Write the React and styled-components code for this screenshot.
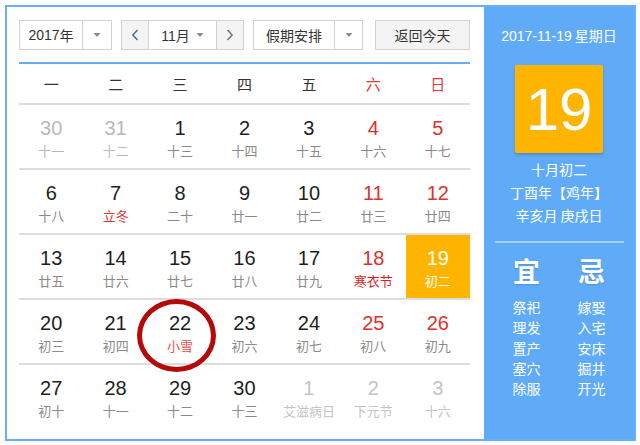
import React from "react";
import styled, { createGlobalStyle } from "styled-components";

const Global = createGlobalStyle`
  html, body { margin: 0; padding: 0; background: #fff; }
  body { font-family: "Liberation Sans", "Noto Sans CJK SC", Arial, sans-serif; }
`;

const Widget = styled.div`
  margin: 5px 0 0 5px;
  width: 627px;
  height: 432px;
  border: 2px solid #6aaef6;
  display: flex;
  background: #fff;
`;

const Main = styled.div`
  width: 451px;
  padding: 13px 14px 0 12px;
  display: flex;
  flex-direction: column;
`;

const Controls = styled.div`
  display: flex;
  height: 30px;
  align-items: stretch;
`;

const Box = styled.div`
  display: flex;
  border: 1px solid #d2d2d2;
  box-sizing: border-box;
  width: ${(p) => p.$w}px;
  margin-right: ${(p) => p.$mr || 0}px;
  background: ${(p) => p.$bg || "#fff"};
  font-family: "Noto Sans CJK SC", "Liberation Sans", sans-serif;
  font-size: 14px;
  color: #333;
`;

const Part = styled.div`
  display: flex;
  align-items: center;
  justify-content: center;
  gap: 6px;
  width: ${(p) => (p.$w ? p.$w + "px" : "auto")};
  flex: ${(p) => (p.$w ? "none" : 1)};
  border-left: ${(p) => (p.$sep ? "1px solid #d2d2d2" : "none")};
  border-right: ${(p) => (p.$sepR ? "1px solid #d2d2d2" : "none")};
  background: ${(p) => p.$bg || "transparent"};
`;

const Num = styled.span`
  font-family: "Liberation Sans", Arial, sans-serif;
`;

const Caret = () => (
  <svg width="8" height="5" viewBox="0 0 8 5">
    <path d="M0.5 0 L7.5 0 L4 4 Z" fill="#8a8a8a" />
  </svg>
);

const Chevron = ({ dir, color }) => (
  <svg width="8" height="12" viewBox="0 0 8 12">
    <path
      d={dir === "l" ? "M6.5 1 L1.8 6 L6.5 11" : "M1.5 1 L6.2 6 L1.5 11"}
      fill="none"
      stroke={color}
      strokeWidth="1.4"
    />
  </svg>
);

const BlueLine = styled.div`
  margin-top: 12px;
  height: 2px;
  background: #68acf4;
`;

const Grid = styled.div`
  display: grid;
  grid-template-columns: repeat(7, 1fr);
`;

const Head = styled.div`
  height: 39px;
  display: flex;
  align-items: center;
  justify-content: center;
  font-family: "Noto Sans CJK SC", sans-serif;
  font-size: 15px;
  color: ${(p) => (p.$red ? "#e23b3b" : "#333")};
  border-bottom: 2px solid #dcdcdc;
`;

const Cell = styled.div`
  position: relative;
  padding-top: 12px;
  height: 51px;
  box-sizing: content-box;
  display: flex;
  flex-direction: column;
  align-items: center;
  background: ${(p) => (p.$sel ? "#ffb400" : "transparent")};
  border-bottom: ${(p) => (p.$last ? "none" : "2px solid #dddddd")};
`;

const Day = styled.div`
  font-family: "Liberation Sans", Arial, sans-serif;
  font-size: 20px;
  line-height: 22px;
  color: ${(p) => p.$c};
`;

const Lunar = styled.div`
  margin-top: 2px;
  font-family: "Noto Sans CJK SC", sans-serif;
  font-size: 13px;
  line-height: 20px;
  color: ${(p) => p.$c};
`;

const Ring = styled.div`
  position: absolute;
  left: -11px;
  top: -1px;
  width: 79px;
  height: 73px;
  box-sizing: border-box;
  border: 5px solid #b50a0a;
  border-radius: 50%;
  z-index: 2;
  pointer-events: none;
`;

const Side = styled.div`
  flex: 1;
  background: #5fabf8;
  display: flex;
  flex-direction: column;
  align-items: center;
  color: #fff;
  font-family: "Noto Sans CJK SC", sans-serif;
`;

const DateLine = styled.div`
  margin-top: 19px;
  font-size: 14px;
  line-height: 18px;
  white-space: nowrap;
`;

const Big = styled.div`
  margin-top: 20px;
  width: 88px;
  height: 88px;
  background: #ffb400;
  border-radius: 2px;
  box-shadow: 0 2px 3px rgba(0, 0, 0, 0.18);
  display: flex;
  align-items: center;
  justify-content: center;
  font-family: "Liberation Sans", Arial, sans-serif;
  font-size: 60px;
  color: #fff;
`;

const Info = styled.div`
  margin-top: 5px;
  font-size: 14px;
  line-height: 23px;
  text-align: center;
  white-space: nowrap;
`;

const Sep = styled.div`
  margin-top: 14px;
  width: 129px;
  height: 2px;
  background: rgba(255, 255, 255, 0.45);
`;

const Luck = styled.div`
  margin-top: 11px;
  display: grid;
  grid-template-columns: 60px 60px;
  column-gap: 5px;
  justify-items: center;
`;

const LuckHead = styled.div`
  font-size: 27px;
  line-height: 34px;
  font-weight: 700;
  text-shadow: 0 1px 2px rgba(0, 0, 0, 0.15);
  margin-bottom: 9px;
`;

const LuckItem = styled.div`
  font-size: 14px;
  line-height: 20.25px;
`;

const C = {
  black: "#1e1e1e",
  gray: "#b9b9b9",
  red: "#e0302f",
  lunar: "#8a8a8a",
  light: "#c4c4c4",
};

const weeks = [
  [
    [30, "十一", "gray"],
    [31, "十二", "gray"],
    [1, "十三"],
    [2, "十四"],
    [3, "十五"],
    [4, "十六", "we"],
    [5, "十七", "we"],
  ],
  [
    [6, "十八"],
    [7, "立冬", "fest"],
    [8, "二十"],
    [9, "廿一"],
    [10, "廿二"],
    [11, "廿三", "we"],
    [12, "廿四", "we"],
  ],
  [
    [13, "廿五"],
    [14, "廿六"],
    [15, "廿七"],
    [16, "廿八"],
    [17, "廿九"],
    [18, "寒衣节", "wefest"],
    [19, "初二", "sel"],
  ],
  [
    [20, "初三"],
    [21, "初四"],
    [22, "小雪", "snow"],
    [23, "初六"],
    [24, "初七"],
    [25, "初八", "we"],
    [26, "初九", "we"],
  ],
  [
    [27, "初十"],
    [28, "十一"],
    [29, "十二"],
    [30, "十三"],
    [1, "艾滋病日", "next"],
    [2, "下元节", "next"],
    [3, "十六", "next"],
  ],
];

function colors(kind) {
  switch (kind) {
    case "gray":
      return [C.gray, C.gray];
    case "we":
      return [C.red, C.lunar];
    case "fest":
      return [C.black, C.red];
    case "wefest":
      return [C.red, "#d81e1e"];
    case "snow":
      return [C.black, "#e25050"];
    case "sel":
      return ["#fff", "#fff"];
    case "next":
      return [C.light, C.light];
    default:
      return [C.black, C.lunar];
  }
}

const heads = ["一", "二", "三", "四", "五", "六", "日"];

export default function App() {
  return (
    <>
      <Global />
      <Widget>
        <Main>
          <Controls>
            <Box $w={93} $mr={9}>
              <Part>
                <Num>2017</Num>
                <span style={{ marginLeft: -6 }}>年</span>
              </Part>
              <Part $w={28} $sep>
                <Caret />
              </Part>
            </Box>
            <Box $w={123} $mr={9}>
              <Part $w={26} $sepR $bg="#f4f4f4">
                <Chevron dir="l" color="#3f6aa8" />
              </Part>
              <Part>
                <span>
                  <Num>11</Num>月
                </span>
                <Caret />
              </Part>
              <Part $w={26} $sep $bg="#f4f4f4">
                <Chevron dir="r" color="#7a6a66" />
              </Part>
            </Box>
            <Box $w={110} $mr={12}>
              <Part>假期安排</Part>
              <Part $w={27} $sep>
                <Caret />
              </Part>
            </Box>
            <Box $w={95} $bg="#f3f3f3">
              <Part>返回今天</Part>
            </Box>
          </Controls>
          <BlueLine />
          <Grid>
            {heads.map((h, i) => (
              <Head key={h} $red={i >= 5}>
                {h}
              </Head>
            ))}
            {weeks.map((w, wi) =>
              w.map(([d, l, k], di) => {
                const [dc, lc] = colors(k);
                return (
                  <Cell key={wi + "-" + di} $sel={k === "sel"} $last={wi === 4}>
                    <Day $c={dc}>{d}</Day>
                    <Lunar $c={lc}>{l}</Lunar>
                    {k === "snow" && <Ring />}
                  </Cell>
                );
              })
            )}
          </Grid>
        </Main>
        <Side>
          <DateLine>
            <Num>2017-11-19</Num> 星期日
          </DateLine>
          <Big>19</Big>
          <Info>
            十月初二
            <br />
            丁酉年【鸡年】
            <br />
            辛亥月 庚戌日
          </Info>
          <Sep />
          <Luck>
            <LuckHead>宜</LuckHead>
            <LuckHead>忌</LuckHead>
            {[
              ["祭祀", "嫁娶"],
              ["理发", "入宅"],
              ["置产", "安床"],
              ["塞穴", "掘井"],
              ["除服", "开光"],
            ].map(([a, b]) => (
              <React.Fragment key={a}>
                <LuckItem>{a}</LuckItem>
                <LuckItem>{b}</LuckItem>
              </React.Fragment>
            ))}
          </Luck>
        </Side>
      </Widget>
    </>
  );
}
